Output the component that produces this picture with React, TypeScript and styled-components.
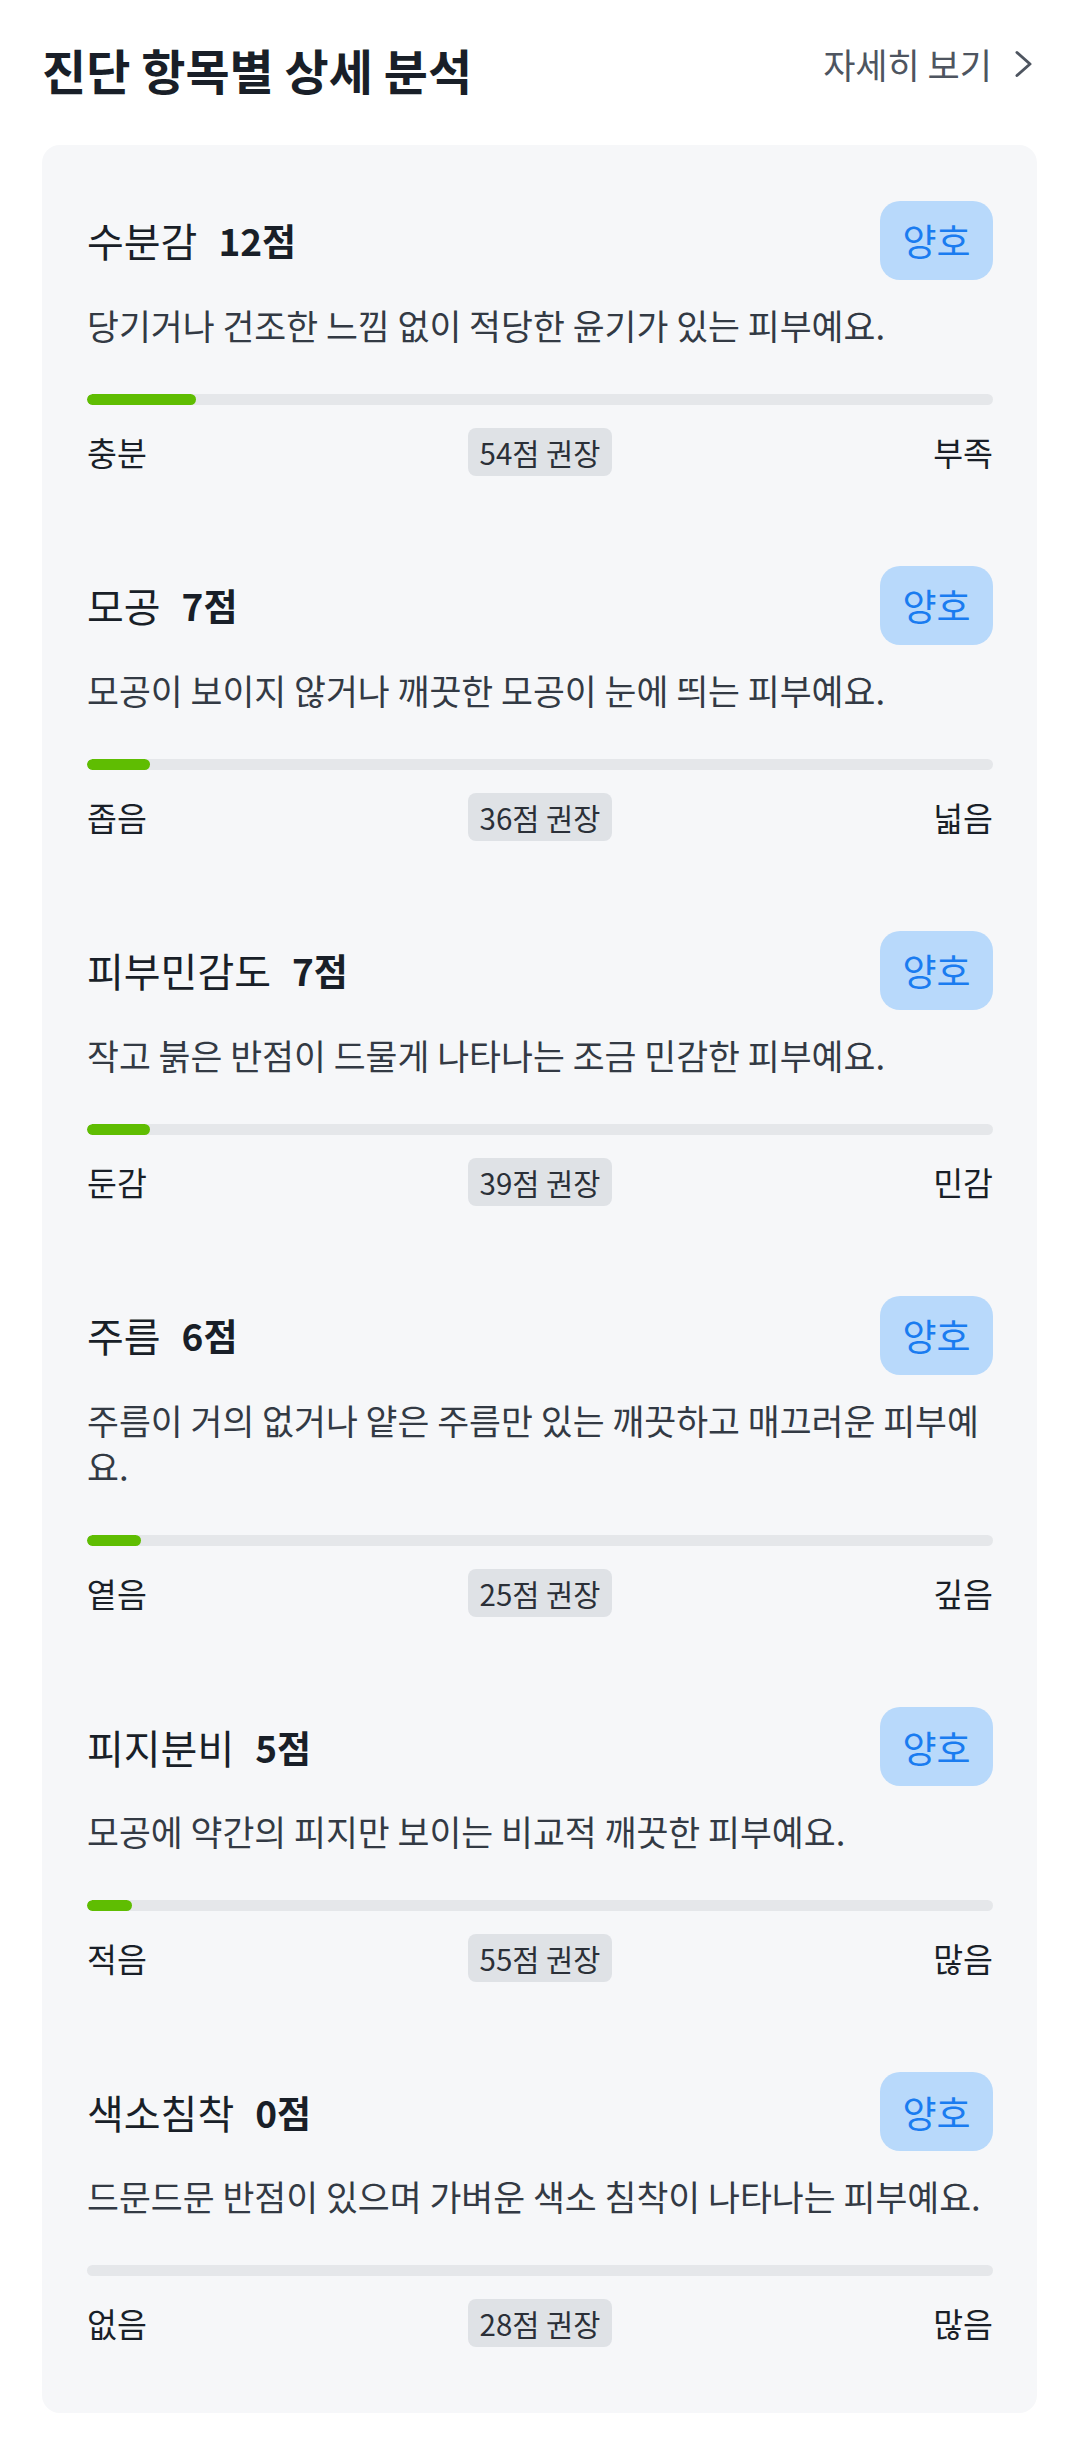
import React from "react";
import styled, { createGlobalStyle } from "styled-components";

const GlobalStyle = createGlobalStyle`
  html, body {
    margin: 0;
    padding: 0;
    background: #ffffff;
  }
  body {
    font-family: "Noto Sans CJK KR", "Noto Sans", sans-serif;
    color: #191f28;
    -webkit-font-smoothing: antialiased;
  }
  * { box-sizing: border-box; }
`;

const Page = styled.div`
  width: 1074px;
  padding: 39px 37px 24px 42px;
  display: flex;
  flex-direction: column;
`;

const Header = styled.header`
  display: flex;
  justify-content: space-between;
  align-items: flex-start;
  margin-bottom: 44px;
`;

const Title = styled.h2`
  margin: 0;
  font-size: 48px;
  line-height: 61.6px;
  font-weight: 700;
  color: #191f28;
`;

const MoreLink = styled.a`
  display: flex;
  align-items: center;
  gap: 21px;
  margin-top: 3px;
  margin-right: 2px;
  font-size: 35px;
  line-height: 44.8px;
  color: #4e5560;
  text-decoration: none;
  cursor: pointer;
`;

const Card = styled.section`
  background: #f6f7f9;
  border-radius: 18px;
  padding: 56px 44px 66px 45px;
  display: flex;
  flex-direction: column;
  gap: 90px;
`;

const Item = styled.article`
  display: flex;
  flex-direction: column;
`;

const ItemHead = styled.div`
  display: flex;
  justify-content: space-between;
  align-items: center;
  height: 79px;
`;

const ItemTitle = styled.div`
  display: flex;
  align-items: center;
  gap: 21px;
  line-height: 50px;
`;

const Label = styled.span`
  font-size: 40px;
  font-weight: 400;
  color: #191f28;
`;

const Score = styled.span`
  font-size: 37px;
  font-weight: 700;
  color: #191f28;
`;

const Badge = styled.span`
  width: 113px;
  height: 79px;
  border-radius: 20px;
  background: #b8d9fb;
  color: #1a7cf0;
  font-size: 37px;
  line-height: 46px;
  display: flex;
  align-items: center;
  justify-content: center;
`;

const Description = styled.p`
  margin: 22px 0 0;
  font-size: 34.7px;
  line-height: 46.5px;
  color: #333a44;
  font-weight: 400;
`;

const Track = styled.div`
  margin-top: 45.5px;
  height: 11px;
  border-radius: 6px;
  background: #e5e7ea;
  overflow: hidden;
`;

const Fill = styled.div`
  height: 100%;
  border-radius: 6px;
  background: #5fbd02;
`;

const Scale = styled.div`
  margin-top: 23px;
  display: grid;
  grid-template-columns: 1fr auto 1fr;
  align-items: center;
  height: 48px;
`;

const ScaleEnd = styled.span<{ $align: "start" | "end" }>`
  justify-self: ${(p) => p.$align};
  font-size: 32.5px;
  line-height: 42px;
  color: #191f28;
`;

const Recommend = styled.span`
  height: 48px;
  padding: 0 12px;
  border-radius: 8px;
  background: #dfe2e6;
  font-size: 29.5px;
  line-height: 40px;
  color: #2b3038;
  display: flex;
  align-items: center;
  justify-content: center;
`;

type Metric = {
  name: string;
  score: number;
  desc: string;
  low: string;
  high: string;
  recommend: number;
};

const metrics: Metric[] = [
  { name: "수분감", score: 12, desc: "당기거나 건조한 느낌 없이 적당한 윤기가 있는 피부예요.", low: "충분", high: "부족", recommend: 54 },
  { name: "모공", score: 7, desc: "모공이 보이지 않거나 깨끗한 모공이 눈에 띄는 피부예요.", low: "좁음", high: "넓음", recommend: 36 },
  { name: "피부민감도", score: 7, desc: "작고 붉은 반점이 드물게 나타나는 조금 민감한 피부예요.", low: "둔감", high: "민감", recommend: 39 },
  { name: "주름", score: 6, desc: "주름이 거의 없거나 얕은 주름만 있는 깨끗하고 매끄러운 피부예요.", low: "옅음", high: "깊음", recommend: 25 },
  { name: "피지분비", score: 5, desc: "모공에 약간의 피지만 보이는 비교적 깨끗한 피부예요.", low: "적음", high: "많음", recommend: 55 },
  { name: "색소침착", score: 0, desc: "드문드문 반점이 있으며 가벼운 색소 침착이 나타나는 피부예요.", low: "없음", high: "많음", recommend: 28 },
];

const Chevron = () => (
  <svg width="22" height="32" viewBox="0 0 22 32" fill="none" aria-hidden="true">
    <path d="M4 4.5 L17 16 L4 27.5" stroke="#4e5560" strokeWidth="3" strokeLinecap="round" strokeLinejoin="round" />
  </svg>
);

export default function App() {
  return (
    <>
      <GlobalStyle />
      <Page>
        <Header>
          <Title>진단 항목별 상세 분석</Title>
          <MoreLink>
            자세히 보기
            <Chevron />
          </MoreLink>
        </Header>
        <Card>
          {metrics.map((m) => (
            <Item key={m.name}>
              <ItemHead>
                <ItemTitle>
                  <Label>{m.name}</Label>
                  <Score>{m.score}점</Score>
                </ItemTitle>
                <Badge>양호</Badge>
              </ItemHead>
              <Description>{m.desc}</Description>
              <Track>
                <Fill style={{ width: `${m.score}%` }} />
              </Track>
              <Scale>
                <ScaleEnd $align="start">{m.low}</ScaleEnd>
                <Recommend>{m.recommend}점 권장</Recommend>
                <ScaleEnd $align="end">{m.high}</ScaleEnd>
              </Scale>
            </Item>
          ))}
        </Card>
      </Page>
    </>
  );
}
